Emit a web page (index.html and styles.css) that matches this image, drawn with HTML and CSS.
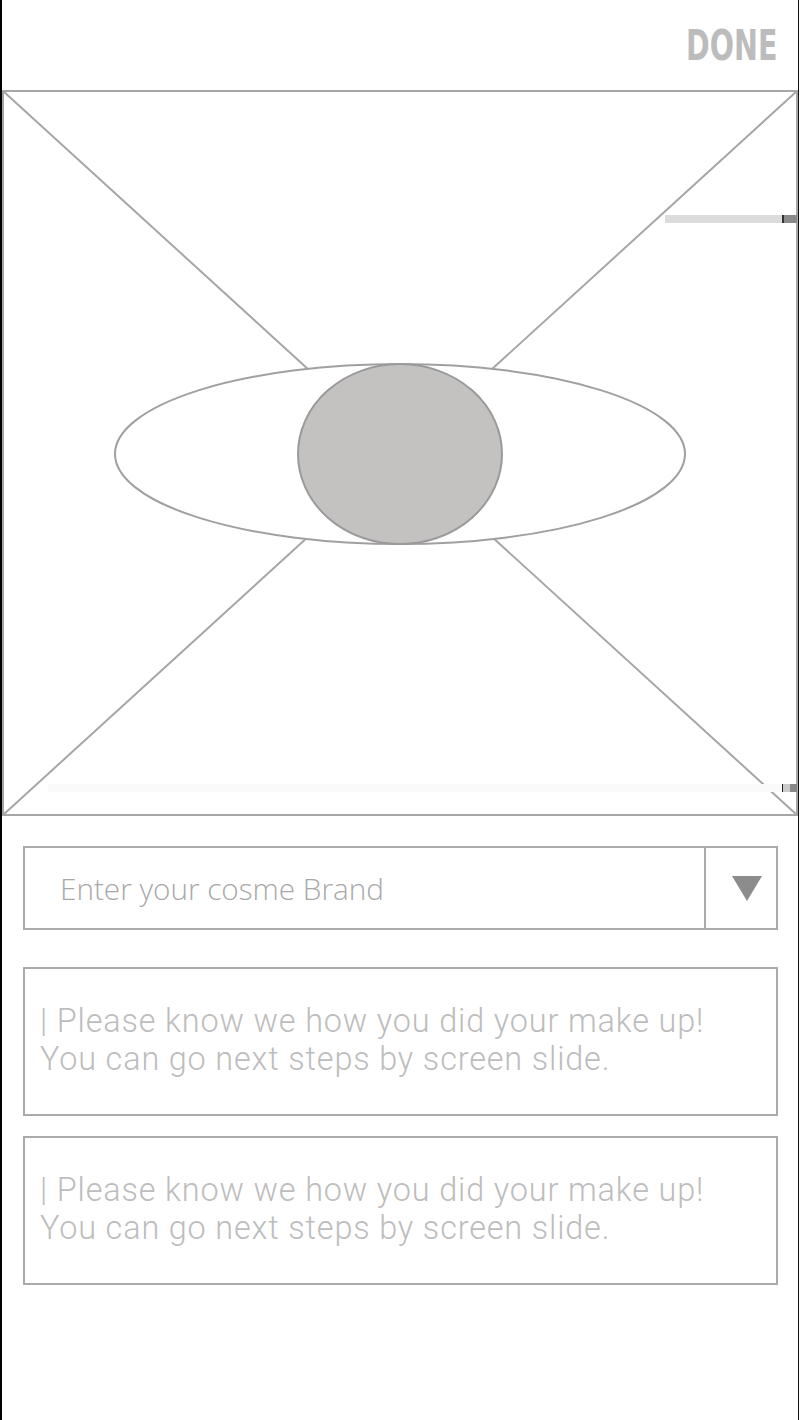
FILE: index.html
```html
<!DOCTYPE html>
<html lang="en">
<head>
<meta charset="utf-8">
<title>Add make up</title>
<link rel="stylesheet" href="styles.css">
</head>
<body>
<div class="screen">
  <header class="topbar">
    <span class="done">DONE</span>
  </header>
  <div class="photo">
    <svg class="photo-svg" viewBox="2 89 797 728" width="797" height="728" xmlns="http://www.w3.org/2000/svg">
      <rect x="3" y="91" width="794" height="724" fill="#fff" stroke="#a6a6a6" stroke-width="2"/>
      <line x1="3" y1="91" x2="797" y2="815" stroke="#a6a6a6" stroke-width="2"/>
      <line x1="797" y1="91" x2="3" y2="815" stroke="#a6a6a6" stroke-width="2"/>
      <ellipse cx="400" cy="454" rx="285" ry="90" fill="#fff" stroke="#a0a0a0" stroke-width="2"/>
      <ellipse cx="400" cy="454" rx="102" ry="90" fill="#c4c1c1" stroke="#9a9a9a" stroke-width="2"/>
      <rect x="665" y="215" width="117" height="8" fill="#dcdcdc"/>
      <rect x="782" y="215" width="2" height="8" fill="#333"/>
      <rect x="784" y="215" width="13" height="8" fill="#8a8a8a"/>
      <rect x="48" y="784" width="734" height="8" fill="#fafafa"/>
      <rect x="782" y="784" width="1" height="8" fill="#222"/>
      <rect x="783" y="784" width="7" height="8" fill="#cacaca"/>
      <rect x="790" y="784" width="7" height="8" fill="#888"/>
    </svg>
  </div>
  <form class="fields">
    <div class="select">
      <span class="select-text">Enter your cosme Brand</span>
      <span class="select-btn"><span class="tri"></span></span>
    </div>
    <div class="note note-first">
      <p>| Please know we how you did your make up!<br>You can go next steps by screen slide.</p>
    </div>
    <div class="note note-second">
      <p>| Please know we how you did your make up!<br>You can go next steps by screen slide.</p>
    </div>
  </form>
</div>
</body>
</html>
```
FILE: styles.css
```css
* { box-sizing: border-box; }
html, body { margin: 0; padding: 0; background: #fff; }
.screen {
  width: 799px;
  height: 1420px;
  border-left: 2px solid #000;
  border-right: 1px solid #111;
  font-family: "Open Sans", "Liberation Sans", sans-serif;
  overflow: hidden;
}
.topbar {
  height: 89px;
  display: flex;
  justify-content: flex-end;
  align-items: flex-start;
  padding: 25px 21px 0 0;
}
.done {
  display: inline-block;
  font-family: "DejaVu Sans", sans-serif;
  font-weight: bold;
  font-size: 42px;
  line-height: 42px;
  color: #bcbcbc;
  transform: scaleX(0.68);
  transform-origin: right center;
}
.photo { height: 728px; }
.photo-svg { display: block; }
.fields {
  margin: 0;
  padding: 29px 20px 0 21px;
  display: flex;
  flex-direction: column;
}
.select {
  height: 84px;
  border: 2px solid #aaa;
  display: flex;
  align-items: stretch;
}
.select-text {
  flex: 1;
  display: flex;
  align-items: center;
  padding-left: 35px;
  font-size: 29.7px;
  font-weight: 300;
  color: #a9a9a9;
}
.select-btn {
  width: 72px;
  border-left: 2px solid #aaa;
  display: flex;
  align-items: center;
  justify-content: center;
  padding-left: 12px;
}
.tri {
  width: 0; height: 0;
  border-left: 15px solid transparent;
  border-right: 15px solid transparent;
  border-top: 25px solid #8c8c8c;
}
.note {
  height: 149px;
  border: 2px solid #aaa;
  padding: 33px 0 0 15px;
}
.note-first { margin-top: 37px; }
.note-second { margin-top: 20px; }
.note p {
  margin: 0;
  font-family: Roboto, "Liberation Sans", sans-serif;
  font-size: 32.4px;
  font-weight: 300;
  letter-spacing: 0.85px;
  line-height: 38px;
  color: #bdbdbd;
}
```
